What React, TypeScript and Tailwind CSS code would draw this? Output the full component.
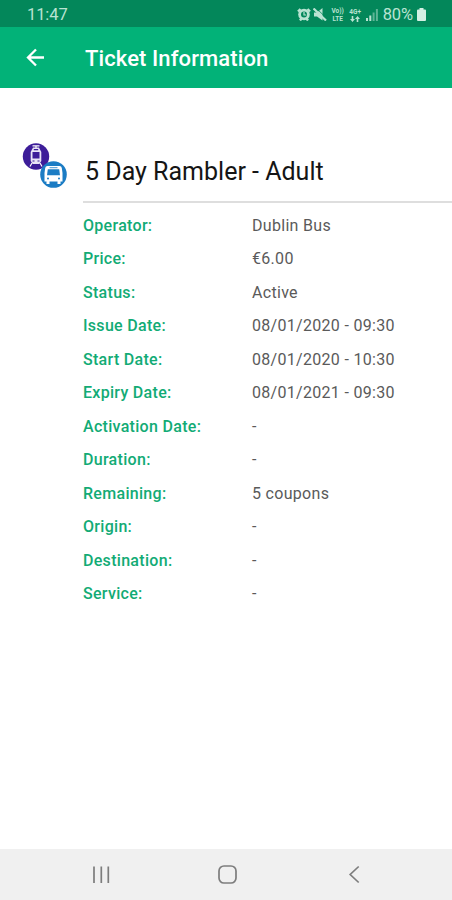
interface Detail {
  label: string;
  value: string;
}

const details: Detail[] = [
  { label: "Operator:", value: "Dublin Bus" },
  { label: "Price:", value: "€6.00" },
  { label: "Status:", value: "Active" },
  { label: "Issue Date:", value: "08/01/2020 - 09:30" },
  { label: "Start Date:", value: "08/01/2020 - 10:30" },
  { label: "Expiry Date:", value: "08/01/2021 - 09:30" },
  { label: "Activation Date:", value: "-" },
  { label: "Duration:", value: "-" },
  { label: "Remaining:", value: "5 coupons" },
  { label: "Origin:", value: "-" },
  { label: "Destination:", value: "-" },
  { label: "Service:", value: "-" },
];

function StatusBar() {
  return (
    <div className="flex h-[27px] items-center bg-[#03875a] pl-[27px] pr-[26px] pt-[2px] text-[#b9e3d2]">
      <span className="pt-px text-[16.5px] leading-none tracking-[-0.1px]">11:47</span>
      <div className="ml-auto flex items-center">
        {/* Alarm */}
        <svg width="14" height="13" viewBox="0 0 14 13" fill="none">
          <path d="M1 3.5 3.5 1M13 3.5 10.5 1M3 12.5l1.5-2M11 12.5l-1.5-2" stroke="currentColor" strokeWidth="2.4" />
          <circle cx="7" cy="6.5" r="5.8" fill="currentColor" />
          <circle cx="7" cy="6.5" r="3" fill="#03875a" />
          <path d="M7 4v3h2.2" stroke="currentColor" strokeWidth="1.2" />
        </svg>
        {/* Muted speaker */}
        <svg className="ml-[2px]" width="14" height="13" viewBox="0 0 14 13">
          <path d="M1 4.5h3L9.5 0v12.5L4 8.5H1z" fill="currentColor" />
          <path d="M3 0 14 10.500" stroke="#03875a" strokeWidth=".8" />
          <path d="M.5.5 13 12.5" stroke="currentColor" strokeWidth="2.2" />
        </svg>
        <div className="ml-[4px] flex w-[14px] flex-col items-center text-[6.5px] font-bold leading-[8px]">
          <span>Vo))</span>
          <span>LTE</span>
        </div>
        <div className="ml-[4px] flex w-[13px] flex-col items-center text-[6.5px] font-bold leading-[8px]">
          <span>4G+</span>
          <svg width="10" height="6" viewBox="0 0 10 6" fill="currentColor">
            <path d="M2.5 6 0 3h1.7V0h1.6v3H5zM7.5 0 10 3H8.3v3H6.7V3H5z" />
          </svg>
        </div>
        {/* Signal strength */}
        <svg className="ml-[4px]" width="12" height="12" viewBox="0 0 12 12" fill="currentColor">
          <path d="M0 9h2v3H0zM3.3 6.5h2V12h-2z" />
          <path d="M6.6 3.5h2V12h-2zM9.9 0h2v12h-2z" opacity=".5" />
        </svg>
        <span className="ml-[5px] pt-px text-[16.5px] leading-none tracking-[-0.1px]">80%</span>
        <svg className="ml-[4px]" width="9" height="13" viewBox="0 0 9 13" fill="#d5f0e4">
          <path d="M2.5 0h4v1.5H8a1 1 0 0 1 1 1V12a1 1 0 0 1-1 1H1a1 1 0 0 1-1-1V2.5a1 1 0 0 1 1-1h1.5z" />
        </svg>
      </div>
    </div>
  );
}

function TransportBadges() {
  return (
    <svg className="shrink-0" width="46" height="46" viewBox="0 0 46 46">
      {/* Tram */}
      <circle cx="14" cy="13.5" r="13.2" fill="#3d1d99" />
      <path d="M10.5 2.8h7M14 3v2" stroke="#fff" strokeWidth="1.2" />
      <path d="M11 4.5h6l2.3 4.5v9l-2 3h-6.6l-2-3V9z" fill="#e9e4f6" />
      <path d="M10.5 9h7v6.5h-7z" fill="#3d1d99" />
      <path d="M11.8 6.7h4.4M10.5 18h2M15.5 18h2" stroke="#3d1d99" strokeWidth="1.2" />
      <path d="m10 20-2 3.5M18 20l2 3.5" stroke="#fff" strokeWidth="1.2" />
      {/* Bus */}
      <circle cx="31.5" cy="31.5" r="13.3" fill="#1b7cc4" />
      <path d="M25.5 23h12q2 0 2.3 2l.7 5v8.5h-2V41h-3v-2.5h-8V41h-3v-2.5h-2V30l.7-5q.3-2 2.300-2z" fill="#fff" />
      <path d="M25.8 26.300h11.400l.8 6H25z" fill="#1b7cc4" />
      <path d="M27.5 24.7h8" stroke="#1b7cc4" strokeWidth=".8" />
      <circle cx="26" cy="35.5" r="1" fill="#1b7cc4" />
      <circle cx="37" cy="35.5" r="1" fill="#1b7cc4" />
    </svg>
  );
}

function NavigationBar() {
  return (
    <div className="flex h-[51px] items-center bg-[#f0f0f0] pl-[91px] pr-[88px] text-[#7d7d7d]">
      <svg width="20" height="20" viewBox="0 0 20 20" stroke="currentColor" strokeWidth="1.7">
        <path d="M3 1.5v16.5M10.3 1.5v16.5M17.3 1.5v16.5" />
      </svg>
      <svg className="ml-[106px]" width="20" height="20" viewBox="0 0 20 20" fill="none" stroke="currentColor" strokeWidth="1.7">
        <rect x="2" y="1" width="17" height="17" rx="5" />
      </svg>
      <svg className="ml-auto" width="20" height="20" viewBox="0 0 20 20" fill="none" stroke="currentColor" strokeWidth="1.7">
        <path d="m14.7 1.5-8.5 8 8.5 8" />
      </svg>
    </div>
  );
}

export default function App() {
  return (
    <div className="flex h-[900px] w-[452px] flex-col overflow-hidden bg-white font-['Roboto',sans-serif]">
      <StatusBar />

      {/* App bar */}
      <header className="flex h-[61px] items-center bg-[#02b278] pl-[26px] text-white">
        <svg width="20" height="20" viewBox="0 0 20 20" fill="none" stroke="currentColor" strokeWidth="2.3">
          <path d="M18 9.5H2.5M10 1.5l-8 8 8 8" />
        </svg>
        <h1 className="ml-[39px] pt-[2px] text-[22px] font-medium tracking-[0.1px]">Ticket Information</h1>
      </header>

      <main className="flex-1 pt-[55px]">
        <div className="flex h-[58px] pl-[22px]">
          <TransportBadges />
          <h2 className="ml-[17px] mt-[12px] text-[25px] leading-[34px] text-[#151515]">
            5 Day Rambler - Adult
          </h2>
        </div>

        {/* Ticket details */}
        <dl className="ml-[83px] border-t-2 border-[#dedede] pt-[6px]">
          {details.map((detail) => (
            <div key={detail.label} className="flex h-[33.5px] items-center text-[16px]">
              <dt className="w-[169px] font-medium tracking-[0.3px] text-[#12ab75]">
                {detail.label}
              </dt>
              <dd className="tracking-[0.3px] text-[#5a5a5a]">{detail.value}</dd>
            </div>
          ))}
        </dl>
      </main>

      <NavigationBar />
    </div>
  );
}
